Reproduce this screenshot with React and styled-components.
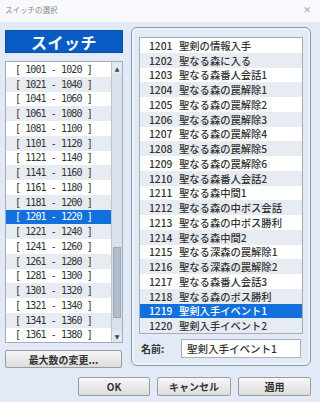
import React, { useState } from 'react';
import styled, { createGlobalStyle } from 'styled-components';

const GlobalStyle = createGlobalStyle`
  html, body {
    margin: 0;
    padding: 0;
    background: #e1eaf6;
  }
  * {
    box-sizing: border-box;
  }
`;

const JP = `"Noto Sans CJK JP", "Noto Sans", sans-serif`;

const Window = styled.div`
  width: 320px;
  height: 402px;
  display: flex;
  flex-direction: column;
  background: #e1eaf6;
  font-family: ${JP};
  color: #333;
  overflow: hidden;
`;

const TitleBar = styled.div`
  height: 22px;
  display: flex;
  align-items: center;
  justify-content: space-between;
  padding: 0 9px 3px 5px;
  background: #f7f9fc;
  color: #8a8a8a;
  font-size: 7.5px;
`;

const Close = styled.span`
  font-family: "DejaVu Sans", sans-serif;
  font-size: 9px;
  color: #a5a5a5;
`;

const Body = styled.div`
  flex: 1;
  display: flex;
  flex-direction: column;
  padding: 5px 9px 0 5px;
`;

const MainRow = styled.div`
  display: flex;
  gap: 8px;
  align-items: flex-start;
`;

const LeftColumn = styled.div`
  width: 118px;
  display: flex;
  flex-direction: column;
  padding-top: 3px;
`;

const Header = styled.div`
  height: 23px;
  background: #0b5bc4;
  border: 1px solid #0a4ea8;
  color: #fff;
  font-weight: 700;
  font-size: 16px;
  letter-spacing: 0.5px;
  display: flex;
  align-items: center;
  justify-content: center;
`;

const ListBox = styled.div`
  margin-top: 8px;
  height: ${(p) => p.$height}px;
  display: flex;
  background: #fff;
  border: 1px solid #a3acb8;
  overflow: hidden;
`;

const Rows = styled.div`
  flex: 1;
  display: flex;
  flex-direction: column;
`;

const RangeRow = styled.div`
  height: 14.75px;
  flex-shrink: 0;
  display: flex;
  align-items: center;
  padding-left: 9px;
  font-family: "DejaVu Sans Mono", monospace;
  font-size: 10px;
  letter-spacing: -0.9px;
  white-space: pre;
  background: ${(p) => (p.$selected ? '#1170dc' : p.$alt ? '#e7ecf2' : '#fff')};
  color: ${(p) => (p.$selected ? '#fff' : '#333')};
`;

const ScrollBar = styled.div`
  width: 11px;
  display: flex;
  flex-direction: column;
  background: #d9e1eb;
  border-left: 1px solid #bcc6d3;
`;

const Arrow = styled.div`
  height: 12px;
  flex-shrink: 0;
  display: flex;
  align-items: center;
  justify-content: center;
  background: #e3e9f1;
  color: #444;
  font-size: 6px;
  font-family: "DejaVu Sans", sans-serif;
`;

const Track = styled.div`
  flex: 1;
  display: flex;
  flex-direction: column;
`;

const Thumb = styled.div`
  height: 71px;
  margin: 0 1px;
  background: #b2bdcb;
  border: 1px solid #9ba8b8;
`;

const Button = styled.button`
  height: ${(p) => (p.$tall ? 19 : 18)}px;
  width: ${(p) => p.$width || 72}px;
  padding: 0;
  border: 1px solid #9c9c9c;
  border-radius: 2px;
  background: linear-gradient(#f7f7f7, #dcdcdc);
  font-family: ${JP};
  font-size: 10px;
  font-weight: 700;
  color: #333;
  display: flex;
  align-items: center;
  justify-content: center;
`;

const MaxButton = styled(Button)`
  margin-top: 7px;
  width: 117px;
`;

const Group = styled.div`
  width: 180px;
  height: 339px;
  border: 1px solid #8e99a7;
  border-radius: 6px;
  box-shadow: inset 0 0 0 2px #eef3fa;
  padding: 9px 7px 0 7px;
  display: flex;
  flex-direction: column;
`;

const SwitchList = styled.div`
  height: 297px;
  background: #fff;
  border: 1px solid #a3acb8;
  display: flex;
  flex-direction: column;
`;

const SwitchRow = styled.div`
  height: 14.75px;
  flex-shrink: 0;
  display: flex;
  align-items: center;
  padding-left: 9px;
  font-size: 10.3px;
  font-weight: 500;
  white-space: nowrap;
  background: ${(p) => (p.$selected ? '#1170dc' : p.$alt ? '#e7ecf2' : '#fff')};
  color: ${(p) => (p.$selected ? '#fff' : '#333')};
`;

const Num = styled.span`
  width: 30px;
  flex-shrink: 0;
`;

const NameRow = styled.div`
  margin-top: 5px;
  display: flex;
  align-items: center;
`;

const NameLabel = styled.span`
  width: 42px;
  padding-left: 2px;
  font-size: 10px;
  font-weight: 700;
`;

const NameInput = styled.div`
  width: 120px;
  height: 19px;
  background: #fff;
  border: 1px solid #a9b3c0;
  display: flex;
  align-items: center;
  padding-left: 5px;
  font-size: 10.5px;
  font-weight: 500;
`;

const ButtonRow = styled.div`
  margin-top: 9px;
  display: flex;
  justify-content: flex-end;
  gap: 7px;
`;

const names = [
  '聖剣の情報入手',
  '聖なる森に入る',
  '聖なる森番人会話1',
  '聖なる森の罠解除1',
  '聖なる森の罠解除2',
  '聖なる森の罠解除3',
  '聖なる森の罠解除4',
  '聖なる森の罠解除5',
  '聖なる森の罠解除6',
  '聖なる森番人会話2',
  '聖なる森中間1',
  '聖なる森の中ボス会話',
  '聖なる森の中ボス勝利',
  '聖なる森中間2',
  '聖なる深森の罠解除1',
  '聖なる深森の罠解除2',
  '聖なる森番人会話3',
  '聖なる森のボス勝利',
  '聖剣入手イベント1',
  '聖剣入手イベント2',
];

const pad = (n) => String(n).padStart(4, '0');

const ranges = Array.from({ length: 19 }, (_, i) => {
  const start = 1001 + i * 20;
  return `[ ${pad(start)} - ${pad(start + 19)} ]`;
});

export default function App() {
  const [range, setRange] = useState(10);
  const [selected, setSelected] = useState(18);

  return (
    <Window>
      <GlobalStyle />
      <TitleBar>
        <span>スイッチの選択</span>
        <Close>✕</Close>
      </TitleBar>
      <Body>
        <MainRow>
          <LeftColumn>
            <Header>スイッチ</Header>
            <ListBox $height={282}>
              <Rows>
                {ranges.map((r, i) => (
                  <RangeRow
                    key={r}
                    $alt={i % 2 === 1}
                    $selected={range === i}
                    onClick={() => setRange(i)}
                  >
                    {r}
                  </RangeRow>
                ))}
              </Rows>
              <ScrollBar>
                <Arrow>▲</Arrow>
                <Track>
                  <div style={{ height: 173 }} />
                  <Thumb />
                </Track>
                <Arrow>▼</Arrow>
              </ScrollBar>
            </ListBox>
            <MaxButton>最大数の変更...</MaxButton>
          </LeftColumn>
          <Group>
            <SwitchList>
              {names.map((n, i) => (
                <SwitchRow
                  key={i}
                  $alt={i % 2 === 1}
                  $selected={selected === i}
                  onClick={() => setSelected(i)}
                >
                  <Num>{1201 + i}</Num>
                  {n}
                </SwitchRow>
              ))}
            </SwitchList>
            <NameRow>
              <NameLabel>名前:</NameLabel>
              <NameInput>{names[selected]}</NameInput>
            </NameRow>
          </Group>
        </MainRow>
        <ButtonRow>
          <Button $tall $width={72}>OK</Button>
          <Button $tall $width={74}>キャンセル</Button>
          <Button $tall $width={73}>適用</Button>
        </ButtonRow>
      </Body>
    </Window>
  );
}
